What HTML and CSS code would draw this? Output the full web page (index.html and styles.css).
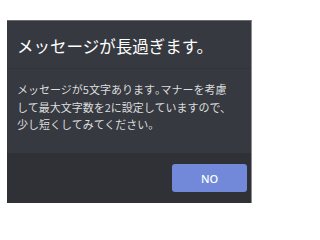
FILE: index.html
```html
<!DOCTYPE html>
<html lang="ja">
<head>
<meta charset="utf-8">
<link rel="stylesheet" href="styles.css">
</head>
<body>
<div class="dialog">
  <div class="header"><h1 class="title">メッセージが長過ぎます。</h1></div>
  <div class="body">
    <p class="msg">メッセージが5文字あります<span class="half">。</span>マナーを考慮<br>して最大文字数を2に設定していますので、<br>少し短くしてみてください。</p>
  </div>
  <div class="footer"><button class="btn">NO</button></div>
</div>
</body>
</html>
```
FILE: styles.css
```css
html, body {
  margin: 0;
  padding: 0;
  background: #ffffff;
}
body {
  font-family: "Noto Sans CJK JP", "Noto Sans", sans-serif;
  padding: 20px 0 0 7px;
}
.dialog {
  width: 245px;
  height: 183px;
  background: #36393f;
  display: flex;
  flex-direction: column;
  box-sizing: border-box;
  border-top: 1px solid #6a6c70;
  border-right: 1px solid #8a8c90;
}
.header {
  padding: 15px 10px 12px;
  box-shadow: 0 1px 0 #30333a;
}
.title {
  margin: 0;
  font-size: 16.5px;
  line-height: 20px;
  font-weight: 400;
  color: #ffffff;
  white-space: nowrap;
}
.body {
  flex: 1;
  padding: 13px 10px 0;
}
.msg {
  margin: 0;
  font-size: 11px;
  line-height: 17.6px;
  color: #dcddde;
  white-space: nowrap;
}
.half {
  font-feature-settings: "halt";
}
.footer {
  height: 50px;
  background: #2f3136;
  display: flex;
  justify-content: flex-end;
  align-items: center;
  padding-right: 4px;
}
.btn {
  width: 75px;
  height: 28px;
  background: #7289da;
  border: none;
  border-radius: 3px;
  color: #ffffff;
  font-family: "Noto Sans", sans-serif;
  font-size: 11px;
  font-weight: 500;
  padding: 0;
}
```
